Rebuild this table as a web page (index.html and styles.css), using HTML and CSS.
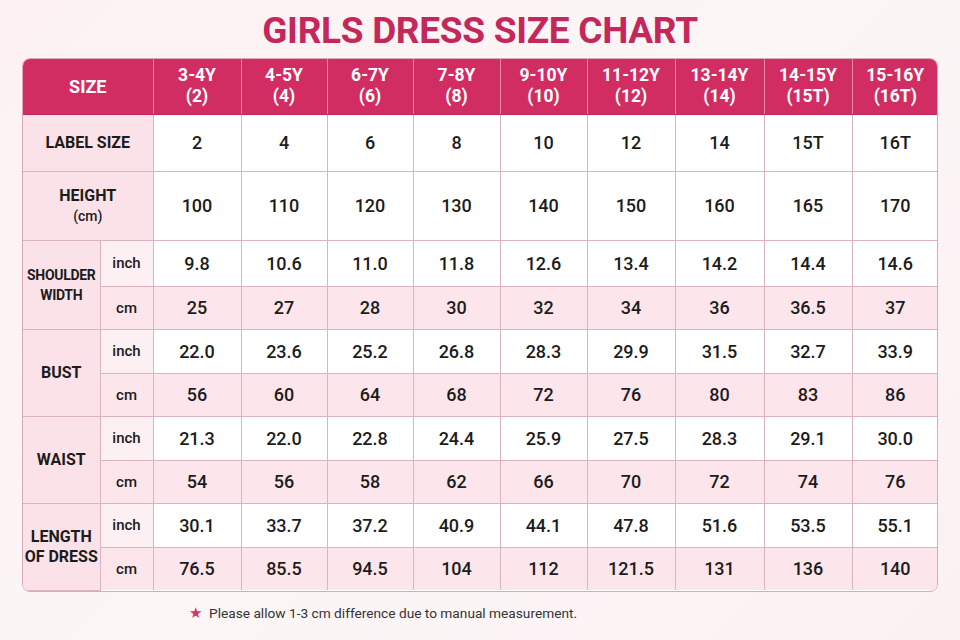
FILE: index.html
```html
<!DOCTYPE html>
<html>
<head>
<meta charset="utf-8">
<link rel="stylesheet" href="styles.css">
</head>
<body>
<div class="page">
  <h1 class="title">GIRLS DRESS SIZE CHART</h1>
  <div class="chart">
    <table class="grid">
      <colgroup>
        <col style="width:77px"><col style="width:53px">
        <col style="width:88px"><col style="width:86px"><col style="width:86px"><col style="width:87px"><col style="width:87px"><col style="width:88px"><col style="width:89px"><col style="width:88px"><col style="width:86px">
      </colgroup>
      <thead>
        <tr class="head">
          <th colspan="2" class="size">SIZE</th>
          <th>3-4Y<br>(2)</th><th>4-5Y<br>(4)</th><th>6-7Y<br>(6)</th><th>7-8Y<br>(8)</th><th>9-10Y<br>(10)</th><th>11-12Y<br>(12)</th><th>13-14Y<br>(14)</th><th>14-15Y<br>(15T)</th><th>15-16Y<br>(16T)</th>
        </tr>
      </thead>
      <tbody>
        <tr class="r-label">
          <th colspan="2" class="rh">LABEL SIZE</th>
          <td>2</td><td>4</td><td>6</td><td>8</td><td>10</td><td>12</td><td>14</td><td>15T</td><td>16T</td>
        </tr>
        <tr class="r-height">
          <th colspan="2" class="rh">HEIGHT<br><span class="unit">(cm)</span></th>
          <td>100</td><td>110</td><td>120</td><td>130</td><td>140</td><td>150</td><td>160</td><td>165</td><td>170</td>
        </tr>
        <tr class="r-in r-sh1">
          <th rowspan="2" class="rh small">SHOULDER<br>WIDTH</th>
          <th class="sub">inch</th>
          <td>9.8</td><td>10.6</td><td>11.0</td><td>11.8</td><td>12.6</td><td>13.4</td><td>14.2</td><td>14.4</td><td>14.6</td>
        </tr>
        <tr class="r-cm r-sh2">
          <th class="sub">cm</th>
          <td>25</td><td>27</td><td>28</td><td>30</td><td>32</td><td>34</td><td>36</td><td>36.5</td><td>37</td>
        </tr>
        <tr class="r-in">
          <th rowspan="2" class="rh">BUST</th>
          <th class="sub">inch</th>
          <td>22.0</td><td>23.6</td><td>25.2</td><td>26.8</td><td>28.3</td><td>29.9</td><td>31.5</td><td>32.7</td><td>33.9</td>
        </tr>
        <tr class="r-cm">
          <th class="sub">cm</th>
          <td>56</td><td>60</td><td>64</td><td>68</td><td>72</td><td>76</td><td>80</td><td>83</td><td>86</td>
        </tr>
        <tr class="r-in">
          <th rowspan="2" class="rh">WAIST</th>
          <th class="sub">inch</th>
          <td>21.3</td><td>22.0</td><td>22.8</td><td>24.4</td><td>25.9</td><td>27.5</td><td>28.3</td><td>29.1</td><td>30.0</td>
        </tr>
        <tr class="r-cm">
          <th class="sub">cm</th>
          <td>54</td><td>56</td><td>58</td><td>62</td><td>66</td><td>70</td><td>72</td><td>74</td><td>76</td>
        </tr>
        <tr class="r-in r-last1">
          <th rowspan="2" class="rh">LENGTH<br>OF DRESS</th>
          <th class="sub">inch</th>
          <td>30.1</td><td>33.7</td><td>37.2</td><td>40.9</td><td>44.1</td><td>47.8</td><td>51.6</td><td>53.5</td><td>55.1</td>
        </tr>
        <tr class="r-cm r-last2">
          <th class="sub">cm</th>
          <td>76.5</td><td>85.5</td><td>94.5</td><td>104</td><td>112</td><td>121.5</td><td>131</td><td>136</td><td>140</td>
        </tr>
      </tbody>
    </table>
  </div>
  <p class="note"><span class="star">★</span>Please allow 1-3 cm difference due to manual measurement.</p>
</div>
</body>
</html>
```

FILE: styles.css
```css
* { box-sizing: border-box; }
html, body { margin: 0; padding: 0; }
body {
  width: 960px;
  height: 640px;
  overflow: hidden;
  background: linear-gradient(135deg, #fdf1f3 0%, #fcf6f7 50%, #fbf1f3 100%);
  font-family: Roboto, "Liberation Sans", sans-serif;
  color: #1c1c1c;
}
.page {
  padding: 0 22px;
}
.title {
  margin: 0;
  height: 58px;
  padding-top: 8px;
  text-align: center;
  font-size: 37px;
  font-weight: 700;
  line-height: 46px;
  color: #c4285a;
  letter-spacing: -0.3px;
}
.chart {
  width: 916px;
  border: 1px solid #d9aab8;
  border-radius: 8px;
  overflow: hidden;
  background: #fff;
}
.grid {
  width: 100%;
  border-collapse: collapse;
  table-layout: fixed;
}
.grid th, .grid td {
  border: 1px solid #dcb3c0;
  text-align: center;
  vertical-align: middle;
  padding: 0;
}
.grid tr > :first-child { border-left: none; }
.grid tr > :last-child { border-right: none; }
.head th {
  background: #d22d63;
  color: #fff;
  height: 55px;
  font-size: 17.5px;
  font-weight: 700;
  line-height: 21px;
  border: 1px solid #ea86a6;
  border-top: none;
  border-bottom: 1px solid #c32658;
}
.head th.size { font-size: 18px; }
.grid td {
  font-size: 18px;
  font-weight: 500;
  color: #1c1c1c;
}
.rh {
  background: #fbe2e8;
  font-size: 16px;
  font-weight: 700;
  line-height: 20px;
  color: #1c1c1c;
}
.rh.small { font-size: 14px; letter-spacing: -0.3px; }
.unit { font-size: 14px; font-weight: 500; }
.sub {
  font-size: 15px;
  font-weight: 500;
  color: #1c1c1c;
}
.r-label td, .r-label th { height: 57px; }
.r-height td, .r-height th { height: 69px; }
.r-in td { background: #fff; height: 44px; }
.r-in .sub { background: #fdf0f3; }
.r-cm td, .r-cm .sub { background: #fce6eb; height: 43px; }
.r-sh1 td { height: 46px; }
.r-last2 td, .r-last2 th { border-bottom: none; height: 42px; }
.r-label td, .r-height td { background: #fff; }
.note {
  margin: 12px 0 0;
  padding-left: 167px;
  font-family: Roboto, "Liberation Sans", sans-serif;
  font-size: 13.7px;
  color: #333;
}
.star {
  color: #d2366a;
  font-size: 15px;
  margin-right: 7px;
}
```
